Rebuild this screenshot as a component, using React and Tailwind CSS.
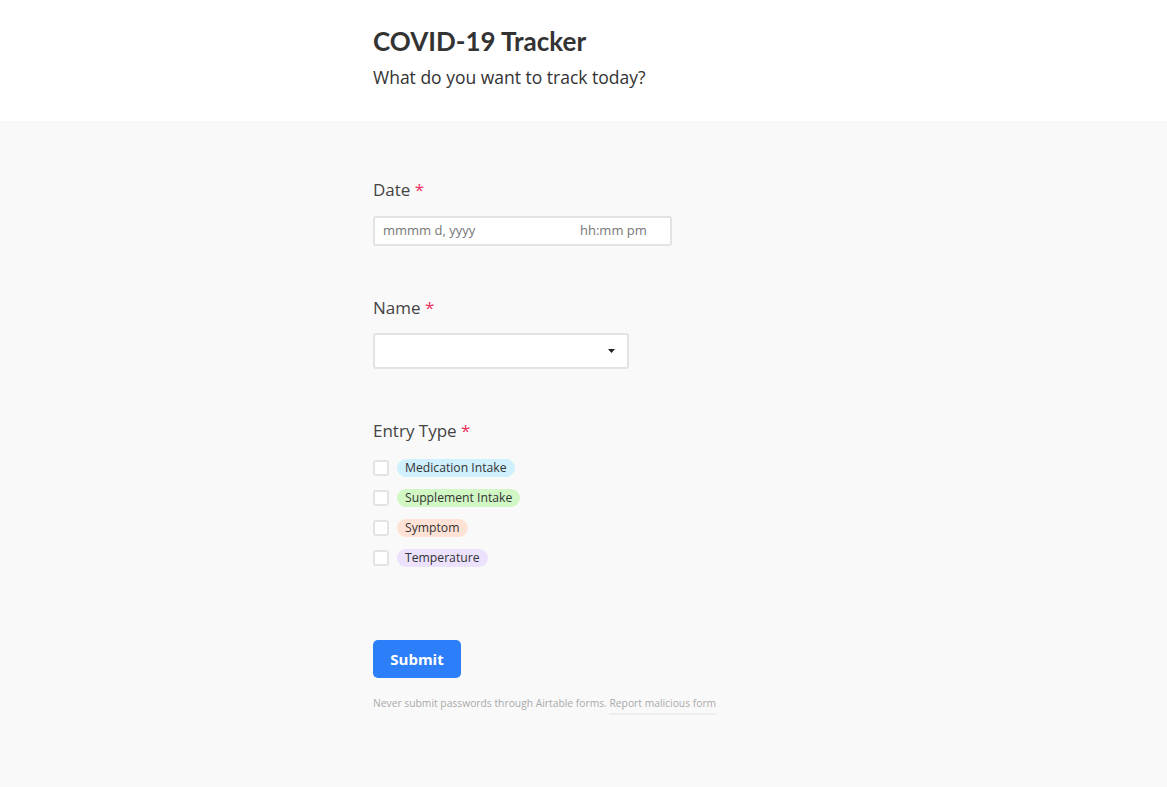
import React from 'react';

const options = [
  { label: 'Medication Intake', cls: 'bg-[#d0f0fd] text-[#333]' },
  { label: 'Supplement Intake', cls: 'bg-[#d1f7c4] text-[#333]' },
  { label: 'Symptom', cls: 'bg-[#fee2d5] text-[#333]' },
  { label: 'Temperature', cls: 'bg-[#ede2fe] text-[#333]' },
];

const Label = ({ children }) => (
  <div className="text-[17px] leading-[22px] text-[#444]">
    {children} <span className="text-[#ef3061]">*</span>
  </div>
);

const App = () => {
  return (
    <div className="min-h-screen bg-[#f9f9f9] font-['Open_Sans',sans-serif]">
      {/* Header */}
      <div className="bg-white h-[121px] pl-[373px] pt-[24px]">
        <h1 className="font-['Lato',sans-serif] font-bold text-[26px] leading-[34px] text-[#333]">COVID-19 Tracker</h1>
        <p className="mt-[7px] text-[17.5px] leading-[24px] text-[#333]">What do you want to track today?</p>
      </div>

      <div className="pl-[373px] pt-[58px] pb-[70px]">
        {/* Date */}
        <Label>Date</Label>
        <div className="mt-[15px] w-[299px] h-[30px] bg-white border-2 border-[#e3e3e3] rounded-[3px] flex items-center text-[13px] text-[#777]">
          <span className="pl-[8px] w-[205px]">mmmm d, yyyy</span>
          <span>hh:mm pm</span>
        </div>

        {/* Name */}
        <div className="mt-[51px]">
          <Label>Name</Label>
          <div className="mt-[14px] w-[256px] h-[36px] bg-white border-2 border-[#e3e3e3] rounded-[3px] flex items-center justify-end pr-[12px]">
            <svg width="7" height="4" viewBox="0 0 7 4"><path d="M0 0h7L3.5 4z" fill="#222" /></svg>
          </div>
        </div>

        {/* Entry Type */}
        <div className="mt-[51px]">
          <Label>Entry Type</Label>
          <div className="mt-[17px] flex flex-col gap-[12px]">
            {options.map((o) => (
              <div key={o.label} className="flex items-center h-[18px]">
                <div className="w-[16px] h-[16px] bg-white border-2 border-[#e3e3e3] rounded-[3px]" />
                <span className={`ml-[8px] px-[8px] h-[18px] leading-[18px] rounded-full text-[12.2px] ${o.cls}`}>
                  {o.label}
                </span>
              </div>
            ))}
          </div>
        </div>

        {/* Submit */}
        <button className="mt-[73px] w-[88px] h-[38px] bg-[#2d7ff9] rounded-[5px] text-white font-bold text-[15px]">
          Submit
        </button>

        <div className="mt-[18px] text-[10.3px] text-[#aaa] flex">
          <span>Never submit passwords through Airtable forms.&nbsp;</span>
          <span className="border-b-2 border-[#eee] pb-[2px]">Report malicious form</span>
        </div>
      </div>
    </div>
  );
};

export default App;
